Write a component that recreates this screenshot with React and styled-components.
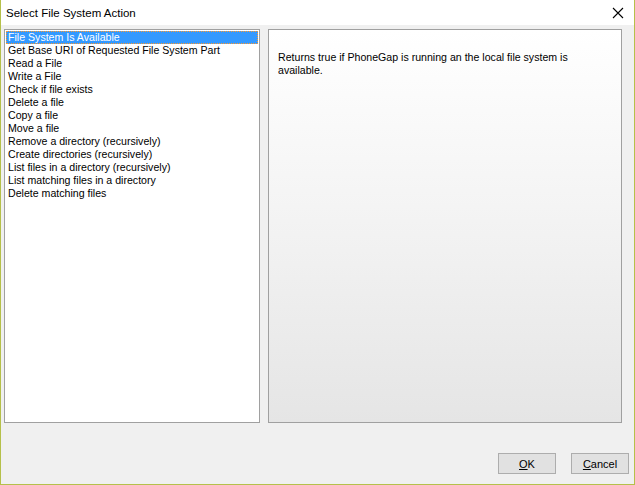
import React from 'react';
import styled, { createGlobalStyle } from 'styled-components';

const GlobalStyle = createGlobalStyle`
    html, body {
        margin: 0;
        padding: 0;
        background: #ffffff;
    }
    * {
        box-sizing: border-box;
    }
`;

const actions = [
    'File System Is Available',
    'Get Base URI of Requested File System Part',
    'Read a File',
    'Write a File',
    'Check if file exists',
    'Delete a file',
    'Copy a file',
    'Move a file',
    'Remove a directory (recursively)',
    'Create directories (recursively)',
    'List files in a directory (recursively)',
    'List matching files in a directory',
    'Delete matching files',
];

const App = () => {
    const selected = 0;
    return (
        <>
            <GlobalStyle />
            <StyledWindow>
                <StyledTitleBar>
                    <StyledTitle>Select File System Action</StyledTitle>
                    <StyledClose>
                        <svg width="12" height="12" viewBox="0 0 12 12">
                            <path d="M1 1 L11 11 M11 1 L1 11" stroke="#000" strokeWidth="1.1" fill="none" />
                        </svg>
                    </StyledClose>
                </StyledTitleBar>
                <StyledBody>
                    <StyledPanels>
                        <StyledList>
                            {actions.map((a, i) => (
                                <StyledItem key={a} selected={i === selected}>{a}</StyledItem>
                            ))}
                        </StyledList>
                        <StyledDescription>
                            Returns true if PhoneGap is running an the local file system is available.
                        </StyledDescription>
                    </StyledPanels>
                    <StyledFooter>
                        <StyledBtn><u>O</u>K</StyledBtn>
                        <StyledBtn><u>C</u>ancel</StyledBtn>
                    </StyledFooter>
                </StyledBody>
            </StyledWindow>
        </>
    );
};

export default App;

const StyledWindow = styled.div`
    width: 635px;
    height: 485px;
    display: flex;
    flex-direction: column;
    border: 1px solid #b5c04a;
    border-top: none;
    background: #f0f0f0;
    font-family: "Liberation Sans", Arial, sans-serif;
    font-size: 10.6px;
    color: #000;
`;

const StyledTitleBar = styled.div`
    height: 25px;
    flex: none;
    display: flex;
    align-items: center;
    justify-content: space-between;
    background: #ffffff;
    padding: 0 9px 0 5px;
`;

const StyledTitle = styled.div`
    font-size: 11.5px;
    padding-top: 1px;
`;

const StyledClose = styled.div`
    display: flex;
    align-items: center;
    justify-content: center;
    width: 14px;
    height: 14px;
`;

const StyledBody = styled.div`
    flex: 1;
    display: flex;
    flex-direction: column;
    padding: 4px 12px 10px 3px;
`;

const StyledPanels = styled.div`
    display: flex;
    gap: 8px;
    height: 394px;
`;

const StyledList = styled.div`
    width: 256px;
    flex: none;
    background: #ffffff;
    border: 1px solid #a0a0a0;
    padding: 1px 1px;
`;

const StyledItem = styled.div`
    height: 13px;
    line-height: 13px;
    padding-left: 2px;
    white-space: nowrap;
    background: ${p => (p.selected ? '#3399ff' : 'transparent')};
    color: ${p => (p.selected ? '#ffffff' : '#000000')};
    outline: ${p => (p.selected ? '1px dotted #ff9a2e' : 'none')};
    outline-offset: -1px;
`;

const StyledDescription = styled.div`
    flex: 1;
    border: 1px solid #a0a0a0;
    background: linear-gradient(to bottom, #ffffff 0%, #f4f4f4 45%, #e5e5e5 100%);
    padding: 21px 9px;
    line-height: 13px;
`;

const StyledFooter = styled.div`
    margin-top: auto;
    display: flex;
    justify-content: flex-end;
    gap: 15px;
    margin-right: -7px;
`;

const StyledBtn = styled.button`
    width: 58px;
    height: 21px;
    border: 1px solid #adadad;
    background: #e1e1e1;
    font-family: "Liberation Sans", Arial, sans-serif;
    font-size: 11px;
    color: #000;
    padding: 0;
    u {
        text-underline-offset: 1px;
    }
`;
